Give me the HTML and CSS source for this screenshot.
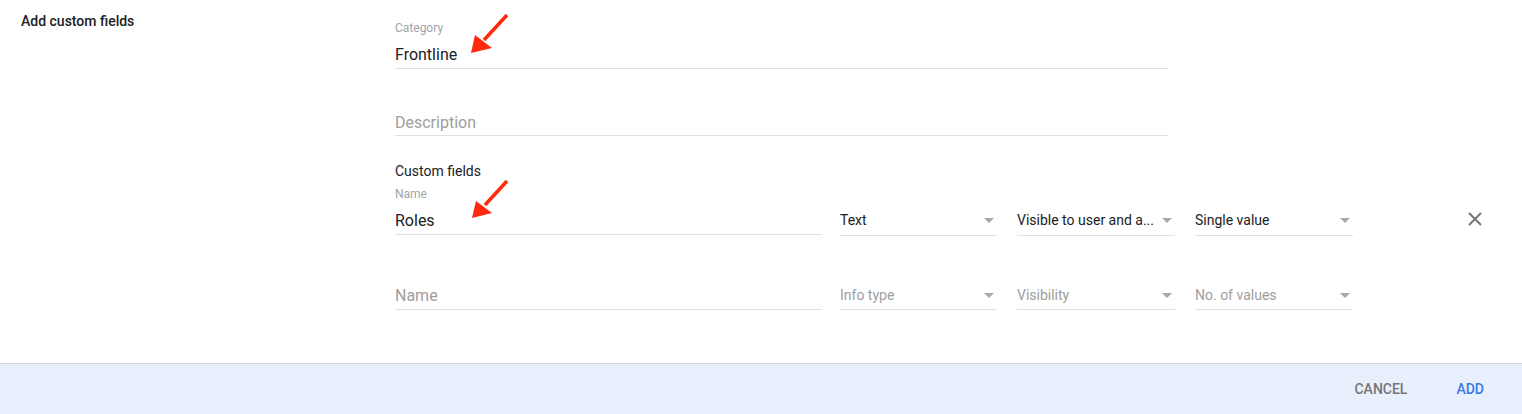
FILE: index.html
```html
<!DOCTYPE html>
<html>
<head>
<meta charset="utf-8">
<link rel="stylesheet" href="styles.css">
</head>
<body>
<div class="page">
  <div class="main">
    <div class="side">Add custom fields</div>
    <div class="form">
      <div class="field">
        <div class="label">Category</div>
        <div class="value">Frontline</div>
      </div>
      <div class="field field-desc">
        <div class="value placeholder">Description</div>
      </div>
      <div class="heading">Custom fields</div>
      <div class="row row-one">
        <div class="field name-field">
          <div class="label">Name</div>
          <div class="value">Roles</div>
        </div>
        <div class="select sel-type">
          <span class="sel-text">Text</span>
          <svg class="caret" width="10" height="5" viewBox="0 0 10 5"><polygon points="0,0 10,0 5,5"/></svg>
        </div>
        <div class="select sel-wide">
          <span class="sel-text">Visible to user and a...</span>
          <svg class="caret" width="10" height="5" viewBox="0 0 10 5"><polygon points="0,0 10,0 5,5"/></svg>
        </div>
        <div class="select sel-wide">
          <span class="sel-text">Single value</span>
          <svg class="caret" width="10" height="5" viewBox="0 0 10 5"><polygon points="0,0 10,0 5,5"/></svg>
        </div>
        <svg class="close" width="14" height="14" viewBox="0 0 14 14"><path d="M1 1 L13 13 M13 1 L1 13"/></svg>
      </div>
      <div class="row row-two">
        <div class="field name-field">
          <div class="value placeholder">Name</div>
        </div>
        <div class="select sel-type">
          <span class="sel-text placeholder">Info type</span>
          <svg class="caret" width="10" height="5" viewBox="0 0 10 5"><polygon points="0,0 10,0 5,5"/></svg>
        </div>
        <div class="select sel-wide">
          <span class="sel-text placeholder">Visibility</span>
          <svg class="caret" width="10" height="5" viewBox="0 0 10 5"><polygon points="0,0 10,0 5,5"/></svg>
        </div>
        <div class="select sel-wide">
          <span class="sel-text placeholder">No. of values</span>
          <svg class="caret" width="10" height="5" viewBox="0 0 10 5"><polygon points="0,0 10,0 5,5"/></svg>
        </div>
      </div>
    </div>
  </div>
  <div class="footer">
    <span class="btn btn-cancel">CANCEL</span>
    <span class="btn btn-add">ADD</span>
  </div>
  <svg class="arrow arrow-one" width="46" height="48" viewBox="0 0 46 48"><path class="shaft" d="M42 5 L19 30"/><polygon points="6,43 10,25 27,38"/></svg>
  <svg class="arrow arrow-two" width="46" height="48" viewBox="0 0 46 48"><path class="shaft" d="M41 5 L19 29"/><polygon points="6,42 10,25 26,37"/></svg>
</div>
</body>
</html>
```
FILE: styles.css
```css
html, body {
  margin: 0;
  padding: 0;
  background: #ffffff;
}
body {
  font-family: Roboto, "Liberation Sans", Arial, sans-serif;
  color: #202124;
}
.page {
  position: relative;
  width: 1522px;
  height: 414px;
  overflow: hidden;
}
.main {
  display: flex;
  height: 363px;
}
.side {
  width: 395px;
  flex: none;
  box-sizing: border-box;
  padding: 12px 0 0 21px;
  font-size: 14px;
  line-height: 18px;
  font-weight: 500;
  color: #202124;
}
.form {
  width: 1127px;
  padding-top: 20px;
}
.field {
  width: 773px;
  border-bottom: 1px solid #e0e0e0;
  padding-bottom: 3px;
}
.label {
  font-size: 12px;
  line-height: 16px;
  color: #a0a4a8;
  margin-bottom: 8px;
}
.value {
  font-size: 16px;
  line-height: 20px;
  padding-top: 1px;
  color: #202124;
}
.placeholder {
  color: #9e9e9e;
}
.field-desc {
  margin-top: 42px;
  padding-bottom: 2px;
}
.field-desc .value {
  padding-top: 2px;
}
.heading {
  margin-top: 26px;
  font-size: 14px;
  line-height: 18px;
  color: #202124;
}
.row {
  display: flex;
  align-items: flex-start;
}
.row-one {
  margin-top: 6px;
}
.row-two {
  margin-top: 49px;
  align-items: flex-end;
}
.name-field {
  width: 427px;
}
.select {
  display: flex;
  align-items: center;
  box-sizing: border-box;
  border-bottom: 1px solid #e0e0e0;
  padding: 0 3px 5px 0;
  font-size: 14px;
  line-height: 20px;
  color: #202124;
}
.row-one .select {
  margin-top: 24px;
}
.row-two .select {
  padding-bottom: 4px;
}
.sel-type {
  width: 157px;
  margin-left: 18px;
}
.sel-wide {
  width: 158px;
  margin-left: 20px;
}
.sel-text {
  flex: 1;
  min-width: 0;
  white-space: nowrap;
}
.sel-text.placeholder {
  color: #9e9e9e;
}
.caret {
  flex: none;
  margin-left: 4px;
  fill: #a8a8a8;
}
.close {
  margin: 26px 0 0 115px;
  stroke: #757575;
  stroke-width: 2;
  fill: none;
}
.footer {
  display: flex;
  align-items: center;
  justify-content: flex-end;
  height: 50px;
  border-top: 1px solid #cdd4de;
  background: #e8f0fe;
  padding-right: 38px;
}
.btn {
  font-size: 14px;
  font-weight: 500;
  line-height: 20px;
}
.btn-cancel {
  color: #757575;
}
.btn-add {
  color: #3b78e7;
  margin-left: 49px;
}
.arrow {
  position: absolute;
  fill: #ff2a0e;
}
.arrow .shaft {
  stroke: #ff2a0e;
  stroke-width: 3.5;
  fill: none;
}
.arrow-one {
  left: 465px;
  top: 10px;
}
.arrow-two {
  left: 466px;
  top: 176px;
}
```
